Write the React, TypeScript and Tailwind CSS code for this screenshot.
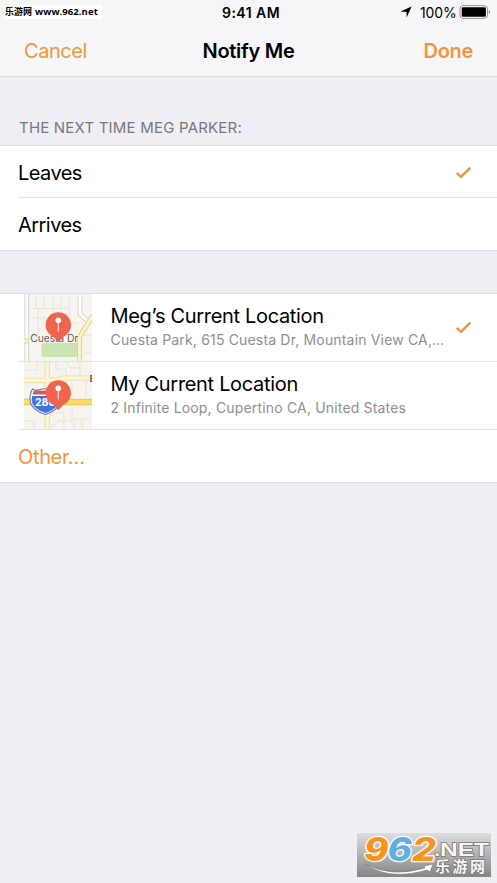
import { useState } from 'react'
import type { ReactNode } from 'react'

function Check() {
    return (
        <svg width="17" height="14" viewBox="0 0 17 14" className="shrink-0" fill="none">
            <path d="M1.8 6.8 L5.9 10.8 L15.4 1.6" stroke="#ee963f" strokeWidth="2.5" />
        </svg>
    )
}

function Pin() {
    return (
        <g>
            <path d="M28 42 L34.3 49.3 L41 42 Z" fill="#ee644e" />
            <circle cx="34.3" cy="32" r="12.7" fill="#ee644e" />
            <path d="M34.3 28 V38.5" stroke="#fbd5cd" strokeWidth="1.3" />
            <circle cx="34.3" cy="27.3" r="2.8" fill="#fff" />
        </g>
    )
}

function CuestaMap() {
    return (
        <svg width="68" height="67" viewBox="0 1 68 67" className="block shrink-0 font-['Inter',sans-serif]">
            <rect width="68" height="68" fill="#f7f3ed" />
            <path
                d="M7 15.5 H45 M12 0 V15 M20 0 V15 M29 0 V24 M37 0 V15 M45 0 V42 M14 15 V40 M7 25 H23 M45 30 H55 M60 42 H68 M60 60 H68"
                stroke="#e9e4dc"
                strokeWidth="1"
                fill="none"
            />
            <path d="M2.8 0 V68 M56 0 V21 L64 28.5" stroke="#d3d0cf" strokeWidth="4.6" fill="none" />
            <path d="M2.8 0 V68 M56 0 V21 L64 28.5" stroke="#fff" strokeWidth="2.8" fill="none" />
            <path d="M0 48 H4 M69 22 L55.5 44 V68" stroke="#e2cf9c" strokeWidth="5" fill="none" />
            <path d="M0 48 H4 M69 22 L55.5 44 V68" stroke="#fdf3c1" strokeWidth="3" fill="none" />
            <rect x="17.5" y="50" width="35.5" height="14" rx="1" fill="#cbe5b2" />
            <text x="6.2" y="48.9" fontSize="10.4" fill="#625f5d" textLength="48" stroke="#f7f3ed" strokeWidth="2" paintOrder="stroke">
                Cuesta Dr
            </text>
            <Pin />
        </svg>
    )
}

function InfiniteLoopMap() {
    return (
        <svg width="68" height="67" viewBox="0 1 68 67" className="block shrink-0 font-['Inter',sans-serif]">
            <rect width="68" height="68" fill="#f7f3ed" />
            <path
                d="M32 0 V8 H42 V15 M42 0 L46 7 H56 M56 0 V15 M0 9 H13 V0 M62 20 V36 M48 22 V36 M29 52 H40 V68 M34 60 H48 V45 M50 68 V58 H66 M58 68 V58 M0 60 H10 V68 M27 67 L36 58"
                stroke="#e7e2da"
                strokeWidth="1"
                fill="none"
            />
            <path d="M0 19.3 H20 Q34 18.8 40 17 H68 M23.2 0 V68" stroke="#e9d9ad" strokeWidth="5.2" fill="none" />
            <path d="M0 19.3 H20 Q34 18.8 40 17 H68 M23.2 0 V68" stroke="#fdf5cc" strokeWidth="3.4" fill="none" />
            <path d="M0 41 H68" stroke="#edc45a" strokeWidth="6.4" />
            <path d="M0 41 H68" stroke="#fbdc62" strokeWidth="4.4" />
            <path
                d="M8.5 28 Q12 30.5 16 28.5 Q21 27 25 28.5 Q30 30 33 28 Q37.5 35 35.5 43 Q32 50 21.5 53.5 Q10 50 6.5 42 Q5 34 8.5 28Z"
                fill="#fff"
                stroke="#6079a9"
                strokeWidth="1.1"
            />
            <path d="M9.5 30 Q20 29 33 30 L34.5 33.5 H8.5 Z" fill="#df5555" />
            <path d="M8 35 H35.2 Q36 40 33.5 44 Q29 50 21.5 52 Q12 49 8.5 43 Q7 39 8 35Z" fill="#3d74e0" />
            <text x="11" y="45.3" fontSize="10.5" fontWeight="700" fill="#fff">280</text>
            <text x="65.5" y="21" fontSize="9.5" fontWeight="600" fill="#555">E</text>
            <Pin />
        </svg>
    )
}

function Watermark() {
    return (
        <svg width="134" height="44" viewBox="0 0 134 44" className="fixed left-[357px] top-[833px]">
            <defs>
                <linearGradient id="plate" x1="0" y1="0" x2="0" y2="1">
                    <stop offset="0" stopColor="#dedede" />
                    <stop offset="1" stopColor="#858585" />
                </linearGradient>
            </defs>
            <rect width="134" height="44" fill="url(#plate)" />
            <g
                className="font-['Inter',sans-serif]"
                fontSize="32"
                fontWeight="800"
                fontStyle="italic"
                stroke="#fff"
                strokeWidth="2.4"
                paintOrder="stroke"
                strokeLinejoin="round"
            >
                <text x="7" y="27.5" fill="#f7941e" textLength="24.5" lengthAdjust="spacingAndGlyphs">9</text>
                <text x="30.5" y="27.5" fill="#62aee3" textLength="24.5" lengthAdjust="spacingAndGlyphs">6</text>
                <text x="55" y="27.5" fill="#f7941e" textLength="24" lengthAdjust="spacingAndGlyphs">2</text>
            </g>
            <path d="M8 31 Q35 45 68 35 L67 33 L76 31 L73 39 L70 37 Q32 48 8 31Z" fill="#fff" stroke="#777" strokeWidth="0.6" />
            <g fill="#f6f6f6" fontWeight="700" stroke="#777" strokeWidth="1.4" paintOrder="stroke">
                <g fontSize="19" className="font-['Liberation_Sans',sans-serif]">
                    <text x="77.5" y="22.5">.</text>
                    <text x="83" y="22.5" textLength="49" lengthAdjust="spacingAndGlyphs">NET</text>
                </g>
                <text x="78" y="39" fontSize="15" textLength="50" className="font-['Noto_Sans_CJK_SC',sans-serif]">乐游网</text>
            </g>
        </svg>
    )
}

function StatusBar() {
    return (
        <div className="relative h-6">
            <div className="absolute left-1 top-[5px] flex h-[14px] w-[98px] items-center bg-white pl-px text-black">
                <span className="w-[30px] whitespace-nowrap font-['Noto_Sans_CJK_SC',sans-serif] text-[9px] font-bold leading-[14px]">乐游网</span>
                <span className="whitespace-nowrap font-['Noto_Sans',sans-serif] text-[9.5px] font-bold leading-[14px] tracking-[0.12px]">www.962.net</span>
            </div>
            <span className="absolute left-[222px] top-[3px] whitespace-nowrap text-[14px] font-semibold leading-5 tracking-[0.45px]">9:41 AM</span>
            <svg width="12" height="12" viewBox="0 0 12 12" className="absolute left-[400px] top-[6px]">
                <path d="M11.6 0.4 L6.6 11.6 V5.9 L0.4 5.6 Z" fill="#000" />
            </svg>
            <span className="absolute left-[420px] top-[3px] whitespace-nowrap text-[14px] leading-5 tracking-[-0.1px]">100%</span>
            <svg width="32" height="14" viewBox="0 0 32 14" className="absolute left-[459px] top-[5px]">
                <rect x="1" y="0.7" width="27.5" height="12.6" rx="3" fill="#fff" stroke="#8e8e90" strokeWidth="1" />
                <rect x="2.7" y="2.2" width="24.2" height="9.6" rx="1.3" fill="#000" />
                <path d="M29.8 5 Q31.2 5.4 31.2 7 Q31.2 8.6 29.8 9Z" fill="#8e8e90" />
            </svg>
        </div>
    )
}

function OptionRow({ label, selected, onClick }: { label: string; selected: boolean; onClick: () => void }) {
    return (
        <button
            onClick={onClick}
            className="flex h-[52px] w-full items-center justify-between pr-[25px] pt-px text-left text-[20px] tracking-[-0.55px] text-black"
        >
            <span>{label}</span>
            {selected && <Check />}
        </button>
    )
}

type LocationRowProps = {
    map: ReactNode
    name: string
    address: string
    selected: boolean
    onClick: () => void
}

function LocationRow({ map, name, address, selected, onClick }: LocationRowProps) {
    return (
        <button onClick={onClick} className="flex h-[67px] w-full items-center pl-[6px] pr-[25px] text-left">
            {map}
            <div className="ml-[18.5px] w-[335px] shrink-0 pb-[2px]">
                <div className="text-[20px] leading-[26px] tracking-[-0.32px] text-black">{name}</div>
                <div className="truncate text-[14px] leading-[22px] tracking-[0.17px] text-[#8f8f91]">{address}</div>
            </div>
            <div className="ml-auto">{selected && <Check />}</div>
        </button>
    )
}

const locations = [
    {
        map: <CuestaMap />,
        name: 'Meg’s Current Location',
        address: 'Cuesta Park, 615 Cuesta Dr, Mountain View CA, United States',
    },
    {
        map: <InfiniteLoopMap />,
        name: 'My Current Location',
        address: '2 Infinite Loop, Cupertino CA, United States',
    },
]

export default function App() {
    const [trigger, setTrigger] = useState('Leaves')
    const [location, setLocation] = useState(0)

    return (
        <div className="h-[883px] w-[497px] overflow-hidden bg-[#efeef4] font-['Inter',sans-serif] text-black">
            <header className="h-[77px] border-b border-[#dadadd] bg-[#f6f6f8]">
                <StatusBar />
                <nav className="flex h-[54px] items-center justify-between px-6 text-[20px]">
                    <button className="w-[100px] text-left tracking-[-0.45px] text-[#ee963f]">Cancel</button>
                    <h1 className="font-semibold tracking-[-0.3px]">Notify Me</h1>
                    <button className="w-[100px] text-right font-semibold tracking-[-0.3px] text-[#ee963f]">Done</button>
                </nav>
            </header>

            <h2 className="flex h-[68px] items-end pb-[7px] pl-[19px] text-[15px] leading-5 tracking-[0.2px] text-[#77777c]">
                THE NEXT TIME MEG PARKER:
            </h2>

            <section className="border-y border-[#e0e0e3] bg-white pl-[18px]">
                <div className="-mb-px">
                    <OptionRow label="Leaves" selected={trigger === 'Leaves'} onClick={() => setTrigger('Leaves')} />
                </div>
                <div className="h-px bg-[#e4e4e6]" />
                <OptionRow label="Arrives" selected={trigger === 'Arrives'} onClick={() => setTrigger('Arrives')} />
            </section>

            {/* Locations */}
            <section className="mt-[42px] border-y border-[#e0e0e3] bg-white pl-[18px]">
                {locations.map((item, i) => (
                    <div key={item.name} className="border-b border-[#e4e4e6]">
                        <LocationRow {...item} selected={location === i} onClick={() => setLocation(i)} />
                    </div>
                ))}
                <button className="flex h-[52px] items-center pt-px text-[20px] tracking-[-0.35px] text-[#ee963f]">Other…</button>
            </section>

            <Watermark />
        </div>
    )
}
